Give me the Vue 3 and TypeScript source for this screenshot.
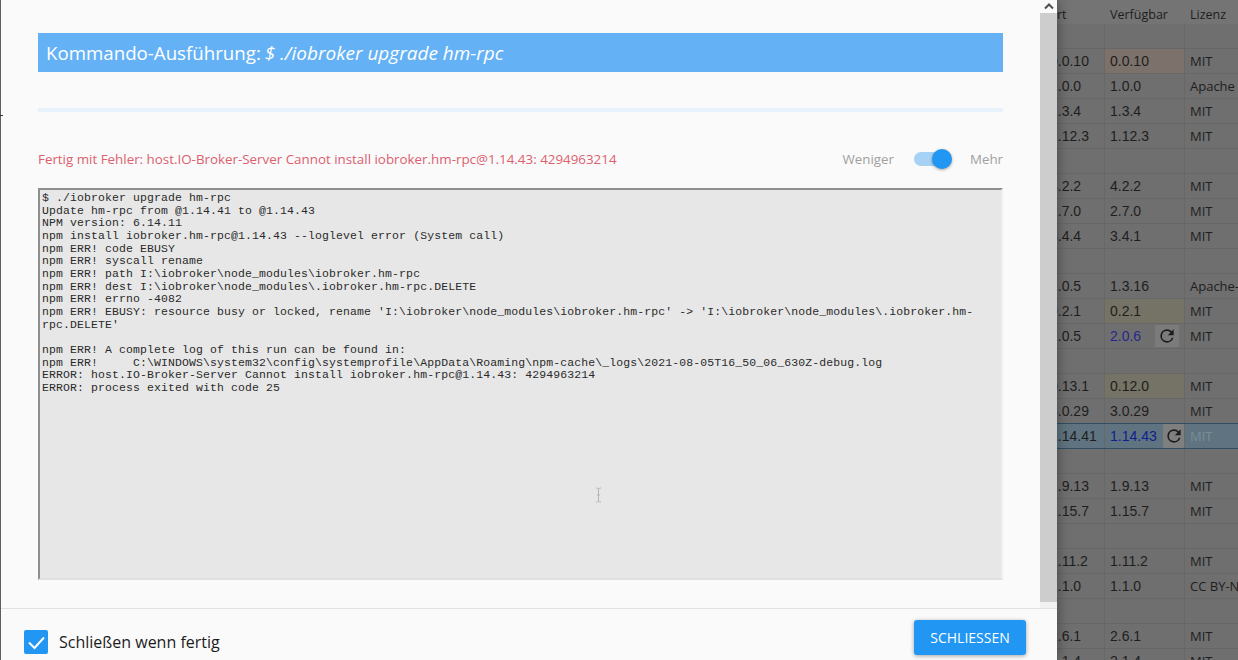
<script setup lang="ts">
interface Row {
  cur?: string
  avail?: string
  lic?: string
  tint?: string
  update?: boolean
  sel?: boolean
}
const rows: Row[] = [
  {},
  { cur: '0.0.10', avail: '0.0.10', lic: 'MIT', tint: 'warm' },
  { cur: '1.0.0', avail: '1.0.0', lic: 'Apache' },
  { cur: '1.3.4', avail: '1.3.4', lic: 'MIT' },
  { cur: '1.12.3', avail: '1.12.3', lic: 'MIT' },
  {},
  { cur: '4.2.2', avail: '4.2.2', lic: 'MIT' },
  { cur: '2.7.0', avail: '2.7.0', lic: 'MIT' },
  { cur: '3.4.4', avail: '3.4.1', lic: 'MIT' },
  {},
  { cur: '1.0.5', avail: '1.3.16', lic: 'Apache-2.0' },
  { cur: '0.2.1', avail: '0.2.1', lic: 'MIT', tint: 'yellow' },
  { cur: '2.0.5', avail: '2.0.6', lic: 'MIT', update: true },
  {},
  { cur: '0.13.1', avail: '0.12.0', lic: 'MIT', tint: 'yellow' },
  { cur: '3.0.29', avail: '3.0.29', lic: 'MIT' },
  { cur: '1.14.41', avail: '1.14.43', lic: 'MIT', update: true, sel: true },
  {},
  { cur: '1.9.13', avail: '1.9.13', lic: 'MIT' },
  { cur: '1.15.7', avail: '1.15.7', lic: 'MIT' },
  {},
  { cur: '1.11.2', avail: '1.11.2', lic: 'MIT' },
  { cur: '1.1.0', avail: '1.1.0', lic: 'CC BY-NC' },
  {},
  { cur: '2.6.1', avail: '2.6.1', lic: 'MIT' },
  { cur: '2.1.4', avail: '2.1.4', lic: 'MIT' },
]
const log = `$ ./iobroker upgrade hm-rpc
Update hm-rpc from @1.14.41 to @1.14.43
NPM version: 6.14.11
npm install iobroker.hm-rpc@1.14.43 --loglevel error (System call)
npm ERR! code EBUSY
npm ERR! syscall rename
npm ERR! path I:\\iobroker\\node_modules\\iobroker.hm-rpc
npm ERR! dest I:\\iobroker\\node_modules\\.iobroker.hm-rpc.DELETE
npm ERR! errno -4082
npm ERR! EBUSY: resource busy or locked, rename 'I:\\iobroker\\node_modules\\iobroker.hm-rpc' -> 'I:\\iobroker\\node_modules\\.iobroker.hm-rpc.DELETE'

npm ERR! A complete log of this run can be found in:
npm ERR!     C:\\WINDOWS\\system32\\config\\systemprofile\\AppData\\Roaming\\npm-cache\\_logs\\2021-08-05T16_50_06_630Z-debug.log
ERROR: host.IO-Broker-Server Cannot install iobroker.hm-rpc@1.14.43: 4294963214
ERROR: process exited with code 25`
</script>

<template>
  <div class="screen">
    <div class="edge"></div>
    <section class="modal">
      <div class="upper">
        <div class="content">
          <h2 class="title">Kommando-Ausführung: <em>$ ./iobroker upgrade hm-rpc</em></h2>
          <div class="progress"></div>
          <div class="status">
            <span class="error">Fertig mit Fehler: host.IO-Broker-Server Cannot install iobroker.hm-rpc@1.14.43: 4294963214</span>
            <span class="more">
              <span>Weniger</span>
              <span class="switch"><span class="knob"></span></span>
              <span>Mehr</span>
            </span>
          </div>
          <div class="logbox">
            <pre class="log">{{ log }}</pre>
            <svg class="cursor" width="7" height="16" viewBox="0 0 7 16"><path d="M1 1h1.5L3.5 2 4.5 1H6M3.5 2v12M1 15h1.5l1-1 1 1H6M2 8h3" fill="none" stroke="#b4b4b4" stroke-width="1"/></svg>
          </div>
        </div>
        <div class="scrollbar">
          <div class="arrow">
            <svg width="10" height="7" viewBox="0 0 10 7"><path d="M1 5.5 5 1.5l4 4" fill="none" stroke="#505050" stroke-width="2"/></svg>
          </div>
          <div class="thumb"></div>
        </div>
      </div>
      <footer class="footer">
        <label class="check">
          <span class="box">
            <svg width="24" height="24" viewBox="0 0 24 24"><path d="M5 12.5 10.5 18 20 7.5" fill="none" stroke="#fff" stroke-width="2"/></svg>
          </span>
          <span>Schließen wenn fertig</span>
        </label>
        <button class="close">Schliessen</button>
      </footer>
    </section>
    <div class="table">
      <div class="head">
        <span class="c1"><span class="inst">Installiert</span></span>
        <span class="c2">Verfügbar</span>
        <span class="c3">Lizenz</span>
      </div>
      <div v-for="(r, i) in rows" :key="i" class="row" :class="{ sel: r.sel }">
        <span class="c1 num">{{ r.cur }}</span>
        <span class="c2 num" :class="[r.tint, { upd: r.update }]">
          {{ r.avail }}
          <span v-if="r.update" class="upd-btn">
            <svg width="20" height="20" viewBox="0 0 24 24"><path d="M17.65 6.35A7.96 7.96 0 0 0 12 4a8 8 0 1 0 7.73 10h-2.08A6 6 0 1 1 12 6c1.66 0 3.14.69 4.22 1.78L13 11h7V4l-2.35 2.35z" fill="#1c1c1c"/></svg>
          </span>
        </span>
        <span class="c3">{{ r.lic }}</span>
      </div>
    </div>
  </div>
</template>

<style>
html, body { margin: 0; overflow: hidden; background: #6f6f6f; }
</style>

<style scoped>
.screen {
  display: flex;
  width: 1238px;
  height: 660px;
  overflow: hidden;
  font-family: "Open Sans", "Noto Sans", sans-serif;
}
.edge { position: relative; z-index: 2; width: 1px; background: #5e5e5e; flex: none; }
.edge::after {
  content: "";
  position: absolute;
  left: 0;
  top: 115px;
  width: 3px;
  height: 1px;
  background: #333;
}
.modal {
  position: relative;
  z-index: 1;
  width: 1056px;
  flex: none;
  display: flex;
  flex-direction: column;
  background: #fafafa;
  box-shadow: 0 0 12px rgba(0, 0, 0, 0.4);
}
.upper { height: 608px; display: flex; flex: none; }
.content { flex: 1; padding: 33px 37px 0; min-width: 0; }
.title {
  margin: 0;
  height: 39px;
  padding-left: 8px;
  background: #64b2f5;
  color: #fff;
  font-size: 18.7px;
  font-weight: 400;
  line-height: 40px;
  white-space: nowrap;
}
.title em { font-style: italic; font-size: 19px; margin-left: -1px; }
.progress { margin-top: 36px; height: 4px; background: #e8f2fc; }
.status {
  margin-top: 35px;
  height: 24px;
  display: flex;
  align-items: center;
  justify-content: space-between;
}
.error { color: #dc5f6e; font-size: 13.37px; }
.more { display: flex; align-items: center; color: #a0a0a0; font-size: 13.3px; }
.switch {
  position: relative;
  display: block;
  width: 34px;
  height: 14px;
  margin: 0 22px 0 20px;
  border-radius: 7px;
  background: #a6d2f6;
}
.knob {
  position: absolute;
  right: -4px;
  top: -3px;
  width: 20px;
  height: 20px;
  border-radius: 50%;
  background: #2196f3;
  box-shadow: 0 1px 3px rgba(0, 0, 0, 0.35);
}
.logbox {
  position: relative;
  box-sizing: border-box;
  margin-top: 17px;
  height: 392px;
  padding: 2px 2px;
  background: #e7e7e7;
  border: 2px solid;
  border-color: #8f8f8f #efefef #e0e0e0 #8f8f8f;
}
.log {
  margin: 0;
  font-family: "Liberation Mono", monospace;
  font-size: 11.47px;
  letter-spacing: 0.12px;
  line-height: 12.67px;
  color: #2a2a2a;
  white-space: pre-wrap;
  padding-right: 25px;
}
.cursor { position: absolute; left: 555px; top: 297px; }
.scrollbar {
  width: 17px;
  flex: none;
  background: #f1f1f1;
  display: flex;
  flex-direction: column;
}
.arrow { height: 13px; display: flex; align-items: center; justify-content: center; background: #fafafa; }
.thumb { height: 589px; background: #cdcdcd; }
.footer {
  box-sizing: border-box;
  flex: 1;
  border-top: 1px solid #e2e2e2;
  display: flex;
  align-items: flex-start;
  justify-content: space-between;
  padding: 11px 31px 0 23px;
}
.check { display: flex; align-items: center; gap: 11px; margin-top: 10px; color: #1c1c1c; font-size: 16px; }
.box { width: 24px; height: 24px; border-radius: 2px; background: #2196f3; display: block; }
.box svg { display: block; }
.close {
  width: 112px;
  height: 35px;
  border: 0;
  border-radius: 3px;
  background: #2196f3;
  color: #fff;
  font-family: inherit;
  font-size: 14px;
  text-transform: uppercase;
  box-shadow: 0 1px 4px rgba(0, 0, 0, 0.35);
  padding: 0;
}
.table {
  flex: none;
  width: 188px;
  margin-left: -7px;
  background: #6f6f6f;
  color: #1e1e1e;
}
.head {
  display: flex;
  height: 24px;
  align-items: center;
  background: #747474;
  font-size: 12.5px;
  padding-top: 5px;
  box-sizing: border-box;
}
.row {
  box-sizing: border-box;
  display: flex;
  height: 25px;
  font-size: 13px;
  border-bottom: 1px solid #676767;
  align-items: stretch;
}
.c1, .c2, .c3 { display: flex; align-items: center; white-space: nowrap; overflow: hidden; box-sizing: border-box; }
.c1 { width: 54px; flex: none; }
.c2 { width: 80px; flex: none; padding-left: 5px; position: relative; border-left: 1px solid #686868; }
.c3 { flex: 1; padding-left: 5px; border-left: 1px solid #686868; }
.head .c1, .head .c2, .head .c3 { border-left: 0; }
.head .c2 { padding-left: 6px; }
.head .c3 { padding-left: 6px; }
.inst { flex: none; margin-left: -38px; }
.num { font-family: "Liberation Sans", Arial, sans-serif; font-size: 14px; }
.warm { background: #7c716b; }
.yellow { background: #757365; }
.upd { color: #28288a; }
.upd-btn {
  position: absolute;
  right: 5px;
  top: 1px;
  width: 24px;
  height: 22px;
  background: #7b7b7b;
  display: flex;
  align-items: center;
  justify-content: center;
}
.sel {
  height: 26px;
  margin-top: -1px;
  background: #5f7480;
  border-top: 1px solid #2f4f63;
  border-bottom: 1px solid #2f4f63;
}
.sel .upd { color: #0f2090; }
.sel .upd-btn { right: 0; width: 21px; top: 0; height: 24px; background: #7f7f7f; }
.sel .c3 { color: #798d98; }
</style>
